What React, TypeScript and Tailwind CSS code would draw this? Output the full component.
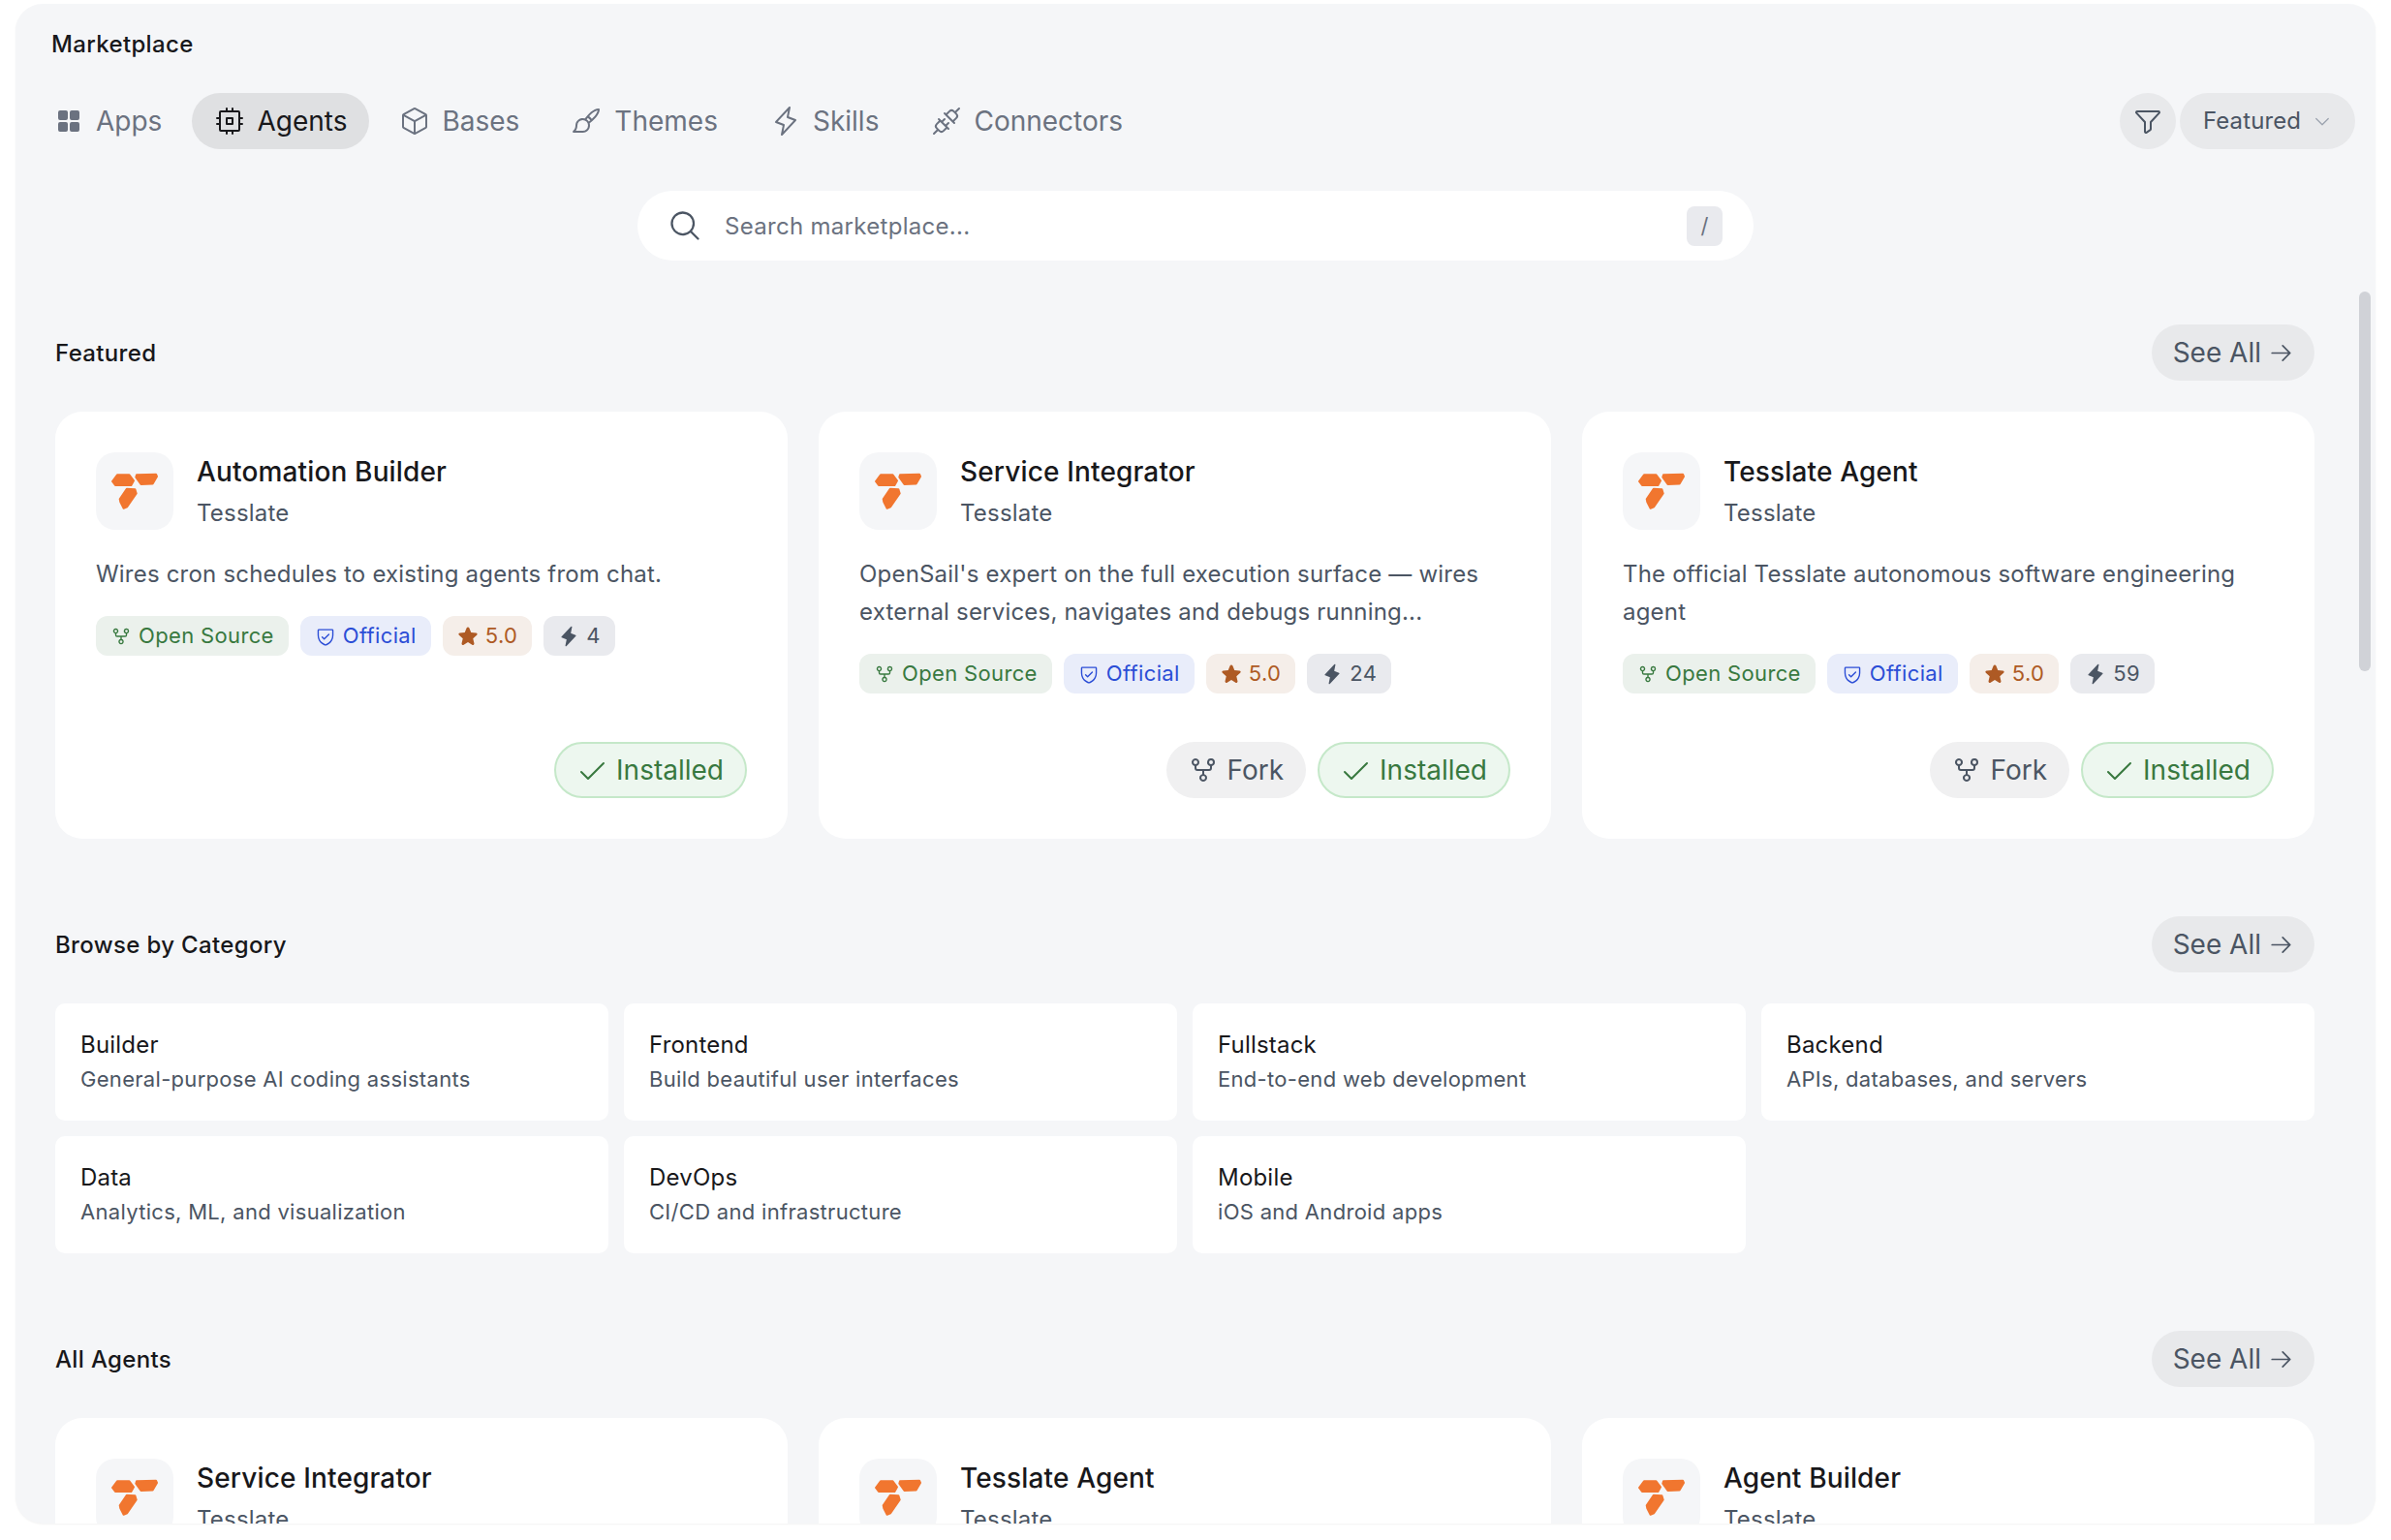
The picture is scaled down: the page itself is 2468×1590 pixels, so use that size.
import React from "react";
import {
  PiSquaresFourFill, PiCpu, PiCube, PiPaintBrush, PiLightning, PiPlugs, PiFunnel,
  PiMagnifyingGlass, PiGitFork, PiShieldCheck, PiStarFill, PiLightningFill, PiCheck,
  PiArrowRight, PiCaretDown,
} from "react-icons/pi";

const tabs = [
  { label: "Apps", Icon: PiSquaresFourFill },
  { label: "Agents", Icon: PiCpu, active: true },
  { label: "Bases", Icon: PiCube },
  { label: "Themes", Icon: PiPaintBrush },
  { label: "Skills", Icon: PiLightning },
  { label: "Connectors", Icon: PiPlugs },
];

function Logo() {
  return (
    <div className="h-[80px] w-[80px] shrink-0 rounded-[20px] bg-[#f5f6f8]">
      <svg width="80" height="80" viewBox="0 0 80 80">
        <g fill="#f1762f" stroke="#f1762f" strokeWidth="2" strokeLinejoin="round">
          <polygon points="22,23.3 34.5,23.3 39,29.3 36.4,34 20,34 17,30" />
          <polygon points="42,23.2 62,22.7 63,25 58.6,32.4 46.5,33 41.3,25.7" />
          <polygon points="31.8,37.7 40.4,38.2 41.7,42.5 32.2,56.3 28.6,57.8 25.3,51.4 24.7,48.4" />
        </g>
      </svg>
    </div>
  );
}

function Tag({ className, icon, children }: { className: string; icon: React.ReactNode; children: React.ReactNode }) {
  return (
    <span className={`flex h-[41px] items-center gap-[7px] rounded-[12px] px-[15px] text-[22px] tracking-[0.35px] ${className}`}>
      {icon}
      {children}
    </span>
  );
}

function AgentCard({ title, desc, runs, fork }: { title: string; desc?: React.ReactNode; runs?: string; fork?: boolean }) {
  return (
    <div className="flex h-[441px] flex-col rounded-[28px] bg-white p-[42px]">
      <div className="flex gap-[24px]">
        <Logo />
        <div>
          <div className="text-[28px] font-medium leading-[40px] tracking-[0.15px] text-[#18181b]">{title}</div>
          <div className="mt-[6px] text-[24px] leading-[34px] tracking-[0.2px] text-[#4b5563]">Tesslate</div>
        </div>
      </div>
      {desc && (
        <>
          <div className="mt-[26px] text-[24px] leading-[39px] tracking-[0.2px] text-[#4b5563]">{desc}</div>
          <div className="mt-[24px] flex gap-[12px]">
            <Tag className="bg-[#ebf1ec] text-[#38793f]" icon={<PiGitFork size={22} />}>Open Source</Tag>
            <Tag className="bg-[#e9edfa] text-[#2b4dd6]" icon={<PiShieldCheck size={22} />}>Official</Tag>
            <Tag className="bg-[#f5eee9] text-[#ae5a24]" icon={<PiStarFill size={22} />}>5.0</Tag>
            <Tag className="bg-[#e9eaee] text-[#4b5563]" icon={<PiLightningFill size={22} />}>{runs}</Tag>
          </div>
          <div className="mt-auto flex justify-end gap-[12px]">
            {fork && (
              <button className="flex h-[58px] items-center gap-[9px] rounded-full bg-[#f0f0f1] pl-[22px] pr-[23px] text-[28px] text-[#4b5563]">
                <PiGitFork size={32} />
                Fork
              </button>
            )}
            <button className="flex h-[58px] items-center gap-[9px] rounded-full border-2 border-[#c5e8c9] bg-[#edf7ef] pl-[21px] pr-[22px] text-[28px] text-[#38793f]">
              <PiCheck size={32} />
              Installed
            </button>
          </div>
        </>
      )}
    </div>
  );
}

function Section({ title, children }: { title: string; children: React.ReactNode }) {
  return (
    <section>
      <div className="flex h-[58px] items-center justify-between">
        <h2 className="pt-[2px] text-[24px] font-medium tracking-[0.35px] text-[#18181b]">{title}</h2>
        <button className="flex h-[58px] items-center gap-[7px] rounded-full bg-[#e8e9eb] pl-[22px] pr-[21px] text-[28px] text-[#4b5563]">
          See All
          <PiArrowRight size={27} />
        </button>
      </div>
      {children}
    </section>
  );
}

function Category({ title, desc }: { title: string; desc: string }) {
  return (
    <div className="flex h-[121px] flex-col justify-center rounded-[10px] bg-white px-[26px] pb-[2px]">
      <div className="text-[24px] leading-[36px] tracking-[0.2px] text-[#18181b]">{title}</div>
      <div className="text-[22px] leading-[34px] tracking-[0.3px] text-[#4b5563]">{desc}</div>
    </div>
  );
}

export default function App() {
  return (
    <div className="h-[1590px] w-[2468px] overflow-hidden bg-white pl-[16px] pt-[4px] font-['Inter',sans-serif]">
      <div className="relative flex h-[1569px] w-[2436px] flex-col overflow-hidden rounded-[28px] bg-[#f5f6f8] shadow-[0_1px_2px_rgba(0,0,0,0.05)]">
        <div className="pl-[37px] pt-[27px] text-[24px] font-medium leading-[30px] tracking-[0.35px] text-[#18181b]">Marketplace</div>
        <div className="mt-[35px] flex items-center justify-between pl-[16px] pr-[21px]">
          <div className="flex gap-[8px]">
            {tabs.map(({ label, Icon, active }) => (
              <button
                key={label}
                className={`flex h-[58px] items-center gap-[12px] rounded-full px-[23px] text-[28px] ${active ? "bg-[#dfe0e2] text-[#18181b]" : "text-[#6b7280]"}`}
              >
                <Icon size={32} />
                {label}
              </button>
            ))}
          </div>
          <div className="flex gap-[4px]">
            <button className="flex h-[58px] w-[58px] items-center justify-center rounded-full bg-[#e8e9eb] text-[#4b5563]">
              <PiFunnel size={32} />
            </button>
            <button className="flex h-[58px] w-[181px] items-center justify-center gap-[12px] rounded-full bg-[#e8e9eb] text-[24px] tracking-[0.1px] text-[#4b5563]">
              Featured
              <PiCaretDown size={20} className="text-[#9ca3af]" />
            </button>
          </div>
        </div>
        <div className="mt-[43px] flex justify-center">
          <div className="flex h-[72px] w-[1152px] items-center rounded-full bg-white pl-[31px] pr-[32px]">
            <PiMagnifyingGlass size={36} className="text-[#4b5563]" />
            <span className="ml-[23px] flex-1 pt-[2px] text-[24px] tracking-[0.3px] text-[#6b7280]">Search marketplace...</span>
            <span className="flex h-[41px] w-[37px] items-center justify-center rounded-[8px] bg-[#e9eaee] text-[22px] text-[#6b7280]">/</span>
          </div>
        </div>
        <div className="mt-[66px] flex flex-col gap-[80px] pl-[41px] pr-[63px]">
          <Section title="Featured">
            <div className="mt-[32px] grid grid-cols-3 gap-[32px]">
              <AgentCard title="Automation Builder" runs="4" desc="Wires cron schedules to existing agents from chat." />
              <AgentCard
                title="Service Integrator"
                runs="24"
                fork
                desc={<>OpenSail's expert on the full execution surface — wires<br />external services, navigates and debugs running...</>}
              />
              <AgentCard
                title="Tesslate Agent"
                runs="59"
                fork
                desc={<>The official Tesslate autonomous software engineering<br />agent</>}
              />
            </div>
          </Section>
          <Section title="Browse by Category">
            <div className="mt-[32px] grid grid-cols-4 gap-[16px]">
              <Category title="Builder" desc="General-purpose AI coding assistants" />
              <Category title="Frontend" desc="Build beautiful user interfaces" />
              <Category title="Fullstack" desc="End-to-end web development" />
              <Category title="Backend" desc="APIs, databases, and servers" />
              <Category title="Data" desc="Analytics, ML, and visualization" />
              <Category title="DevOps" desc="CI/CD and infrastructure" />
              <Category title="Mobile" desc="iOS and Android apps" />
            </div>
          </Section>
          <Section title="All Agents">
            <div className="mt-[32px] grid grid-cols-3 gap-[32px]">
              <AgentCard title="Service Integrator" />
              <AgentCard title="Tesslate Agent" />
              <AgentCard title="Agent Builder" />
            </div>
          </Section>
        </div>
        <div className="absolute right-[5px] top-[297px] h-[392px] w-[12px] rounded-full bg-[#d0d2d7]" />
      </div>
    </div>
  );
}
